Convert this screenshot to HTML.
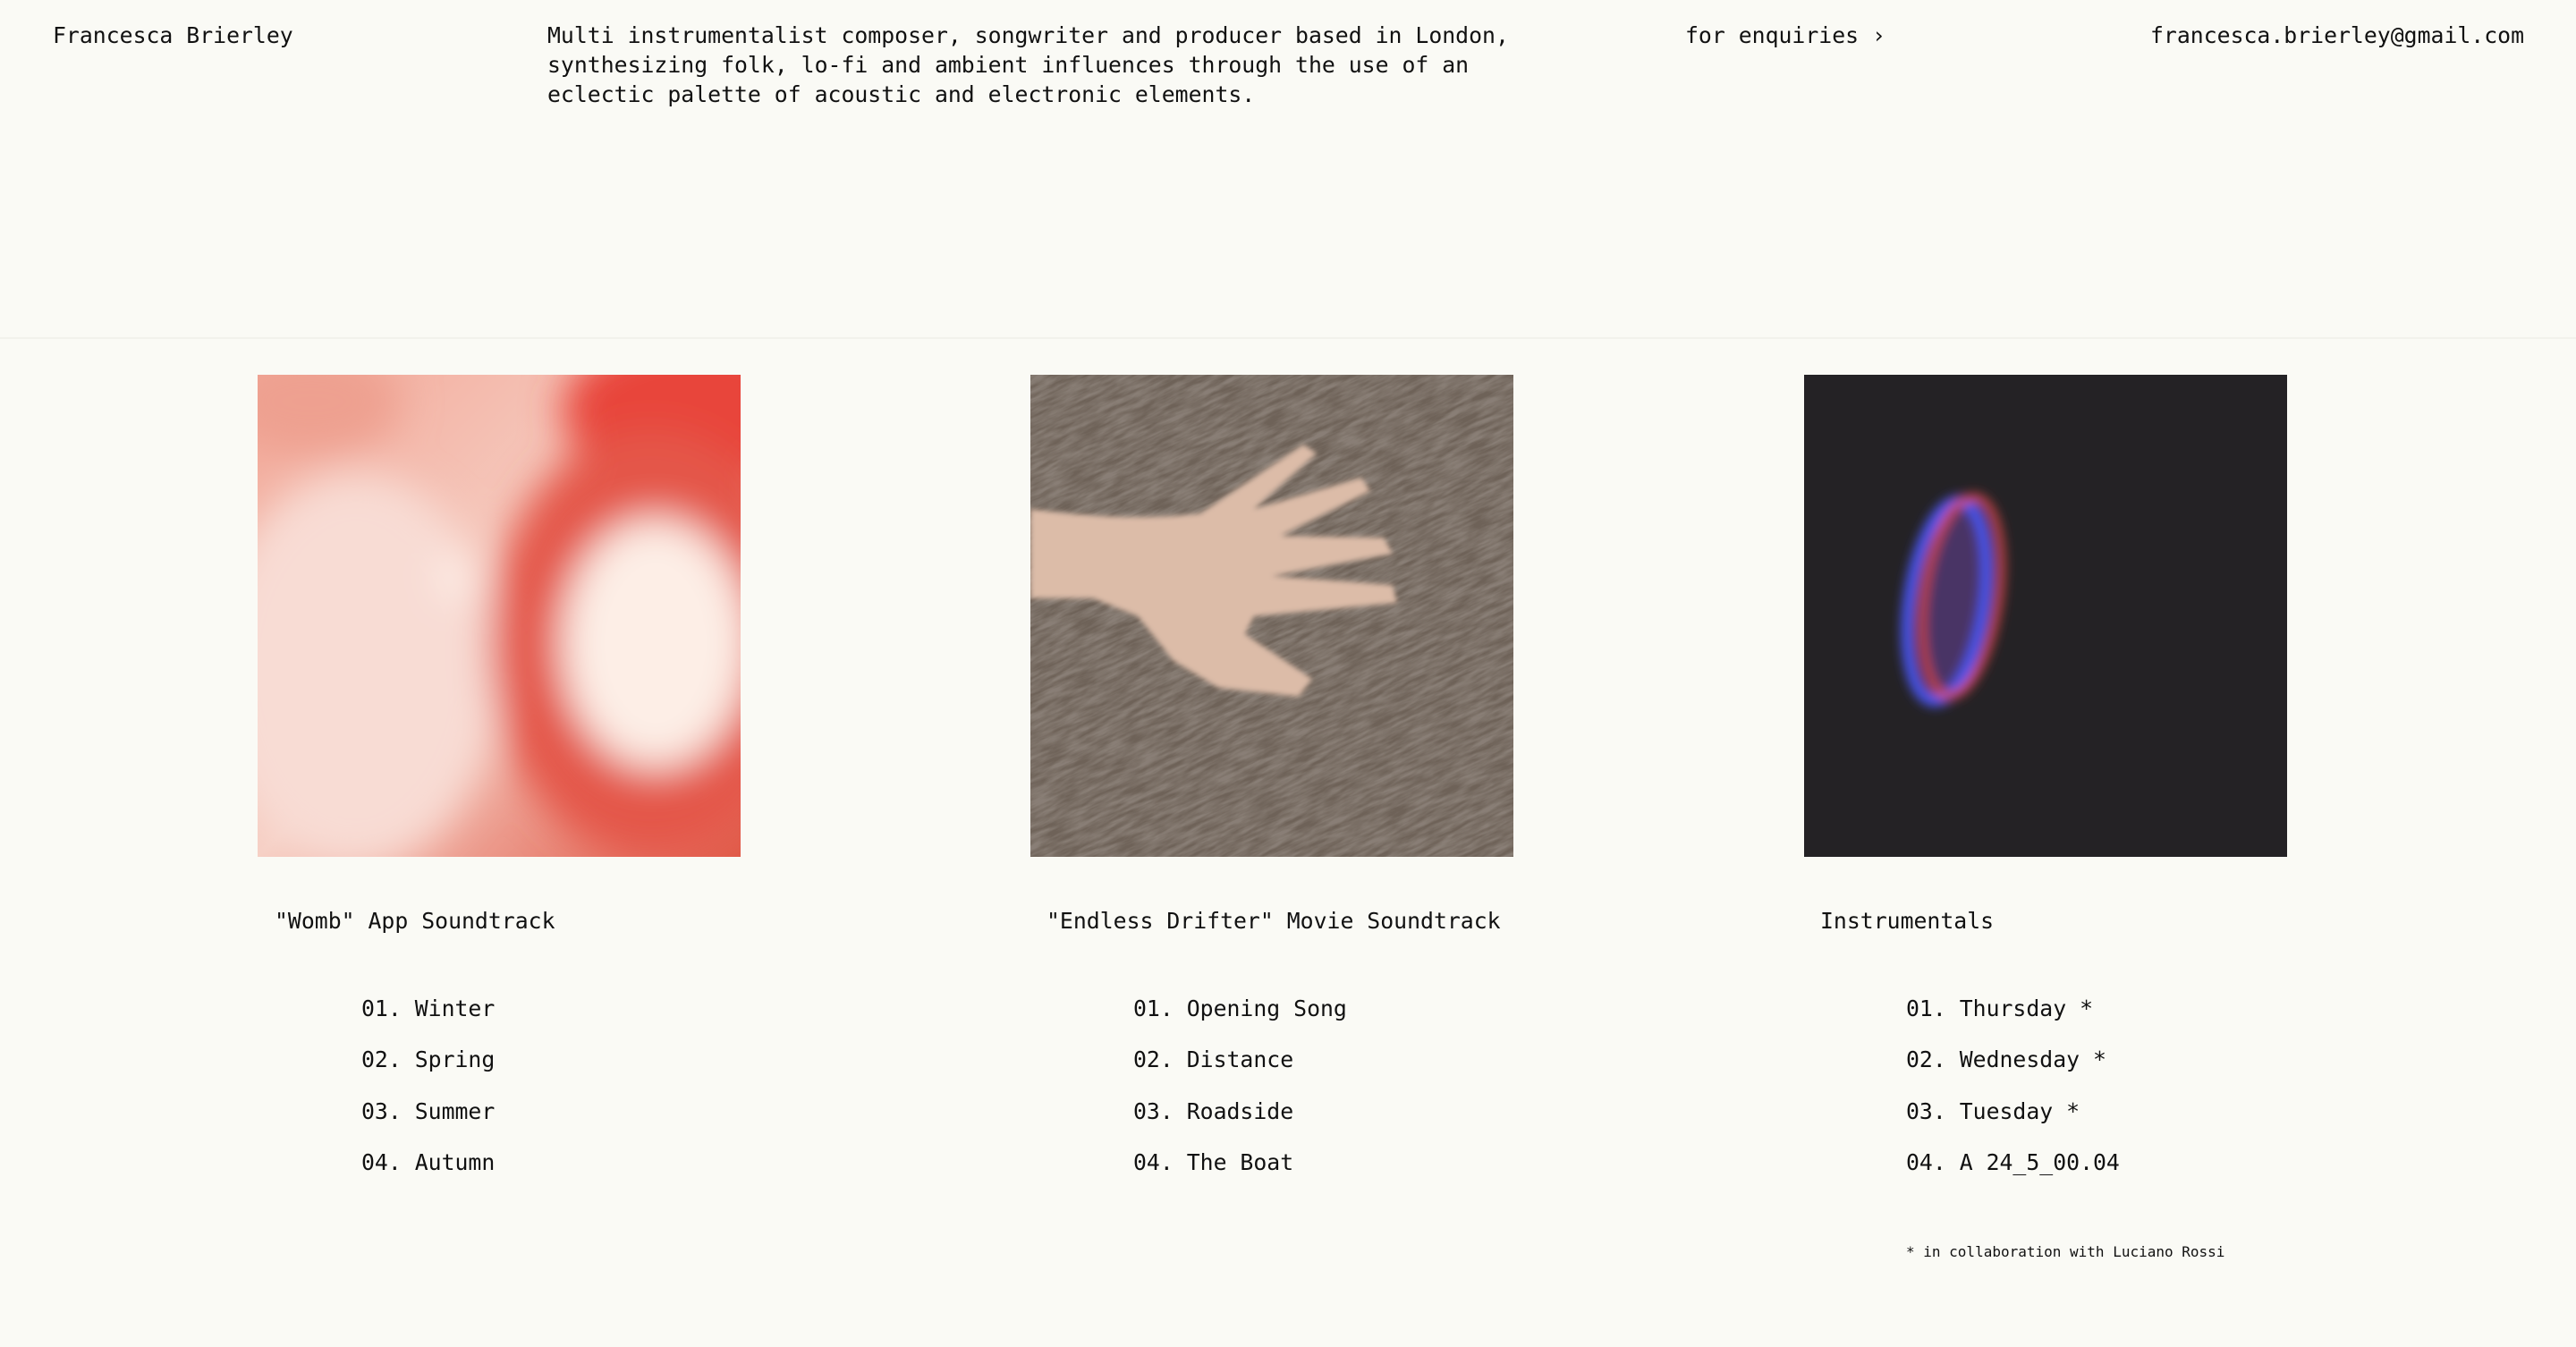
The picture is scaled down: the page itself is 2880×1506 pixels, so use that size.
<!DOCTYPE html>
<html><head><meta charset="utf-8"><style>
*{margin:0;padding:0;box-sizing:border-box}
html,body{width:2880px;height:1506px;background:#fafaf5;overflow:hidden}
body{position:relative;font-family:"DejaVu Sans Mono","Liberation Mono",monospace;font-size:24.8px;color:#111;}
.a{position:absolute;white-space:pre;line-height:33px}
.img{position:absolute;top:419px;width:540px;height:539px;overflow:hidden}
.line{position:absolute;left:0;right:0;top:377px;height:2px;background:#f2f2ec}
.t{position:absolute;white-space:pre;line-height:33px}
.fn{position:absolute;white-space:pre;font-size:16px}
</style></head><body>
<div class="a" style="left:59px;top:23px">Francesca Brierley</div>
<div class="a" style="left:612px;top:23px">Multi instrumentalist composer, songwriter and producer based in London,
synthesizing folk, lo-fi and ambient influences through the use of an
eclectic palette of acoustic and electronic elements.</div>
<div class="a" style="left:1884px;top:23px">for enquiries ›</div>
<div class="a" style="left:2404px;top:23px">francesca.brierley@gmail.com</div>
<div class="line"></div>

<div class="img" style="left:288px">
<svg width="540" height="539"><defs><filter id="b1"><feGaussianBlur stdDeviation="22"/></filter>
<linearGradient id="g1" x1="0" y1="0" x2="1" y2="1"><stop offset="0" stop-color="#f2a898"/><stop offset="0.5" stop-color="#f6cfc4"/><stop offset="1" stop-color="#e05a48"/></linearGradient></defs>
<rect width="540" height="539" fill="url(#g1)"/>
<g filter="url(#b1)">
<ellipse cx="490" cy="40" rx="150" ry="90" fill="#e8453a"/>
<ellipse cx="110" cy="330" rx="160" ry="220" fill="#f8dcd4"/>
<ellipse cx="440" cy="300" rx="180" ry="240" fill="#e4564a"/>
<ellipse cx="445" cy="300" rx="105" ry="140" fill="#fdeee6"/>
<ellipse cx="222" cy="225" rx="16" ry="26" fill="#fff4ee"/>
<ellipse cx="60" cy="30" rx="100" ry="60" fill="#eea090"/>
</g></svg></div>

<div class="img" style="left:1152px">
<svg width="540" height="539"><defs>
<filter id="n"><feTurbulence type="fractalNoise" baseFrequency="0.05 0.3" numOctaves="4" seed="4"/><feColorMatrix type="matrix" values="0 0 0 0 0.25  0 0 0 0 0.21  0 0 0 0 0.18  0 0 0 -2 1.5"/></filter>
<filter id="b2"><feGaussianBlur stdDeviation="3"/></filter></defs>
<rect width="540" height="539" fill="#6e6258"/>
<rect width="540" height="539" filter="url(#n)" transform="rotate(-25 270 270) scale(1.6) translate(-100 -100)"/>
<g fill="#dcbca8" filter="url(#b2)">
<path d="M0 150 L0 250 L70 250 L120 270 L160 320 L210 350 L300 360 L315 340 L240 290 L250 270 L410 255 L405 235 L270 225 L405 200 L395 182 L280 180 L380 130 L370 115 L250 150 L320 88 L305 78 L190 155 Q110 165 0 150Z"/>
</g></svg></div>

<div class="img" style="left:2017px">
<svg width="540" height="539"><defs><filter id="b3"><feGaussianBlur stdDeviation="6"/></filter></defs>
<rect width="540" height="539" fill="#242225"/>
<g filter="url(#b3)" fill="none">
<ellipse cx="170" cy="250" rx="35" ry="105" fill="#5a3a80" opacity="0.7" transform="rotate(8 170 250)"/>
<ellipse cx="160" cy="253" rx="42" ry="112" stroke="#4a55f0" stroke-width="14" transform="rotate(8 160 253)"/>
<ellipse cx="176" cy="248" rx="42" ry="112" stroke="#e84a4a" stroke-width="9" transform="rotate(8 176 248)" opacity="0.85"/>
</g></svg></div>

<div class="t" style="left:307px;top:1013px">"Womb" App Soundtrack</div>
<div class="t" style="left:1170px;top:1013px">"Endless Drifter" Movie Soundtrack</div>
<div class="t" style="left:2035px;top:1013px">Instrumentals</div>

<div class="t" style="left:404px;top:1111px">01. Winter</div>
<div class="t" style="left:404px;top:1168px">02. Spring</div>
<div class="t" style="left:404px;top:1226px">03. Summer</div>
<div class="t" style="left:404px;top:1283px">04. Autumn</div>

<div class="t" style="left:1267px;top:1111px">01. Opening Song</div>
<div class="t" style="left:1267px;top:1168px">02. Distance</div>
<div class="t" style="left:1267px;top:1226px">03. Roadside</div>
<div class="t" style="left:1267px;top:1283px">04. The Boat</div>

<div class="t" style="left:2131px;top:1111px">01. Thursday *</div>
<div class="t" style="left:2131px;top:1168px">02. Wednesday *</div>
<div class="t" style="left:2131px;top:1226px">03. Tuesday *</div>
<div class="t" style="left:2131px;top:1283px">04. A 24_5_00.04</div>

<div class="fn" style="left:2131px;top:1390px">* in collaboration with Luciano Rossi</div>
</body></html>
